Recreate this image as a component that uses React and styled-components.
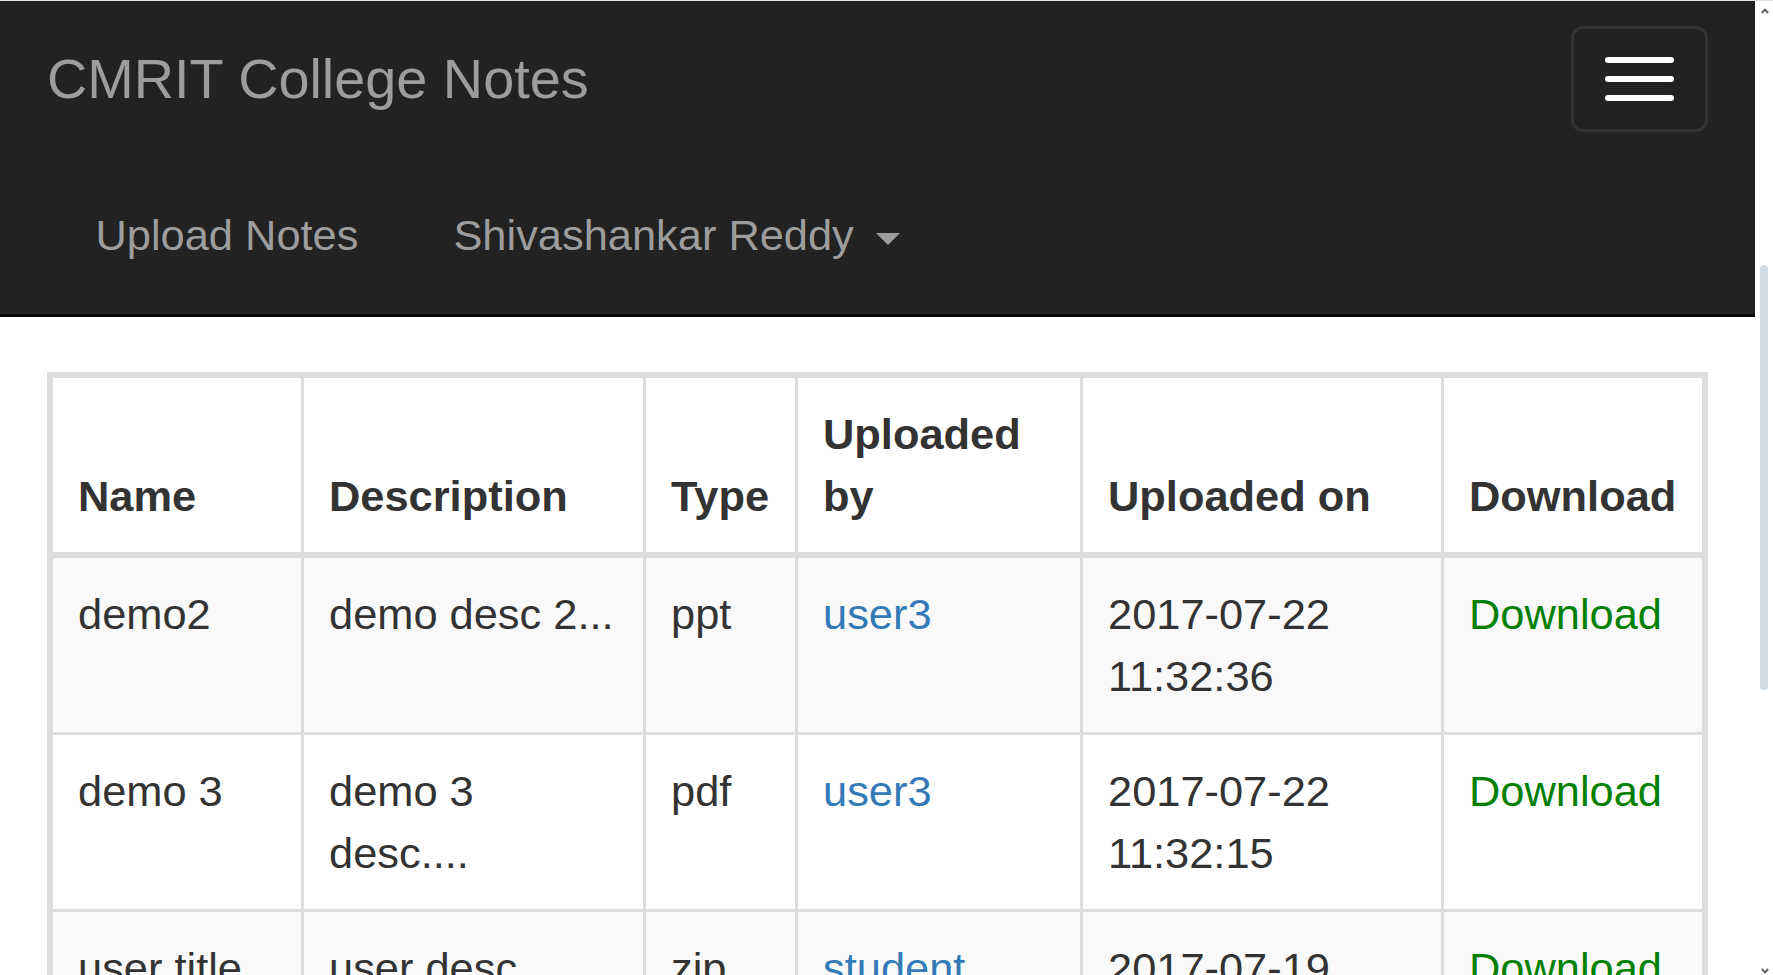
import React from "react";
import styled, { createGlobalStyle } from "styled-components";

const GlobalStyle = createGlobalStyle`
  html, body {
    margin: 0;
    padding: 0;
    overflow: hidden;
    background: #fff;
  }
  * {
    box-sizing: border-box;
  }
`;

const notes = [
  {
    name: "demo2",
    desc: "demo desc 2...",
    type: "ppt",
    user: "user3",
    date: "2017-07-22 11:32:36",
  },
  {
    name: "demo 3",
    desc: "demo 3 desc....",
    type: "pdf",
    user: "user3",
    date: "2017-07-22 11:32:15",
  },
  {
    name: "user title",
    desc: "user desc...",
    type: "zip",
    user: "student",
    date: "2017-07-19 10:24:51",
  },
];

const columns = [
  { label: "Name", width: 248 },
  { label: "Description", width: 342 },
  { label: "Type", width: 152 },
  { label: "Uploaded by", width: 285 },
  { label: "Uploaded on", width: 361 },
  { label: "Download", width: 261, nowrap: true },
];

function App() {
  return (
    <>
      <GlobalStyle />
      <Viewport>
        <Page>
          <Navbar>
            <NavHeader>
              <Brand href="#">CMRIT College Notes</Brand>
              <Toggle type="button" aria-label="Toggle navigation">
                <IconBar />
                <IconBar />
                <IconBar />
              </Toggle>
            </NavHeader>
            <NavList>
              <NavLink href="#">Upload Notes</NavLink>
              <NavLink href="#">
                Shivashankar Reddy <Caret />
              </NavLink>
            </NavList>
          </Navbar>

          <Main>
            <TableWrap>
              <Table>
                <thead>
                  <tr>
                    {columns.map((c, i) => (
                      <Th key={c.label} $w={c.width} $first={i === 0} $nowrap={c.nowrap}>
                        {c.label}
                      </Th>
                    ))}
                  </tr>
                </thead>
                <tbody>
                  {notes.map((n, r) => (
                    <Row key={n.name} $striped={r % 2 === 0}>
                      <Td $first $top={r > 0}>{n.name}</Td>
                      <Td $top={r > 0}>{n.desc}</Td>
                      <Td $top={r > 0}>{n.type}</Td>
                      <Td $top={r > 0}>
                        <UserLink href="#">{n.user}</UserLink>
                      </Td>
                      <Td $top={r > 0}>{n.date}</Td>
                      <Td $top={r > 0}>
                        <DownloadLink href="#">Download</DownloadLink>
                      </Td>
                    </Row>
                  ))}
                </tbody>
              </Table>
            </TableWrap>
          </Main>
        </Page>

        <Scrollbar>
          <Arrow>
            <svg width="8" height="6" viewBox="0 0 8 6">
              <polyline points="0.8,5 4,1.6 7.2,5" fill="none" stroke="#606060" strokeWidth="2" />
            </svg>
          </Arrow>
          <Thumb $top={244} $height={425} />
          <Arrow $bottom>
            <svg width="8" height="6" viewBox="0 0 8 6">
              <polyline points="0.8,1 4,4.4 7.2,1" fill="none" stroke="#606060" strokeWidth="2" />
            </svg>
          </Arrow>
        </Scrollbar>
      </Viewport>
    </>
  );
}

const Viewport = styled.div`
  display: flex;
  width: 100vw;
  height: 975px;
  border-top: 1px solid #dbe2e9;
  overflow: hidden;
  font-family: "Liberation Sans", Arial, Helvetica, sans-serif;
`;

const Page = styled.div`
  flex: 1;
  min-width: 0;
  overflow: hidden;
`;

const Navbar = styled.nav`
  background: #222;
  border-bottom: 3px solid #080808;
`;

const NavHeader = styled.div`
  display: flex;
  justify-content: space-between;
  align-items: flex-start;
  height: 155px;
`;

const Brand = styled.a`
  padding: 46.5px 47px;
  font-size: 55.8px;
  line-height: 62px;
  color: #9d9d9d;
  text-decoration: none;
  white-space: nowrap;
`;

const Toggle = styled.button`
  margin: 25px 47px 0 0;
  width: 137px;
  height: 106px;
  padding: 0;
  background: transparent;
  border: 3px solid #333;
  border-radius: 12px;
  display: flex;
  flex-direction: column;
  align-items: center;
  justify-content: center;
  gap: 13px;
`;

const IconBar = styled.span`
  display: block;
  width: 69px;
  height: 6px;
  border-radius: 3px;
  background: #fff;
`;

const NavList = styled.div`
  display: flex;
  padding: 17px 0 17px 48px;
`;

const NavLink = styled.a`
  padding: 31px 47.5px;
  font-size: 43.4px;
  line-height: 62px;
  color: #9d9d9d;
  text-decoration: none;
  white-space: nowrap;
`;

const Caret = styled.span`
  display: inline-block;
  width: 0;
  height: 0;
  margin-left: 10px;
  vertical-align: middle;
  border-top: 12px solid #9d9d9d;
  border-left: 12px solid transparent;
  border-right: 12px solid transparent;
`;

const Main = styled.main`
  padding: 55px 47px 0;
`;

const TableWrap = styled.div`
  border: 3px solid #ddd;
`;

const Table = styled.table`
  width: 100%;
  table-layout: fixed;
  border-collapse: separate;
  border-spacing: 0;
  border: 3px solid #ddd;
  font-size: 43.4px;
  line-height: 62px;
  color: #333;
`;

const Th = styled.th`
  width: ${(p) => p.$w}px;
  padding: 25px;
  text-align: left;
  vertical-align: bottom;
  font-weight: bold;
  white-space: ${(p) => (p.$nowrap ? "nowrap" : "normal")};
  background: #fff;
  border-left: ${(p) => (p.$first ? "0" : "3px solid #ddd")};
  border-bottom: 6px solid #ddd;
`;

const Row = styled.tr`
  background: ${(p) => (p.$striped ? "#f9f9f9" : "#fff")};
`;

const Td = styled.td`
  padding: 25px;
  vertical-align: top;
  border-left: ${(p) => (p.$first ? "0" : "3px solid #ddd")};
  border-top: ${(p) => (p.$top ? "3px solid #ddd" : "0")};
`;

const UserLink = styled.a`
  color: #337ab7;
  text-decoration: none;
`;

const DownloadLink = styled.a`
  color: green;
  text-decoration: none;
`;

const Scrollbar = styled.div`
  flex: 0 0 18px;
  display: flex;
  flex-direction: column;
  background: #fff;
`;

const Arrow = styled.div`
  height: 20px;
  display: flex;
  align-items: center;
  justify-content: center;
  padding-left: 2px;
  margin-top: ${(p) => (p.$bottom ? "auto" : "0")};
  margin-bottom: ${(p) => (p.$bottom ? "-6px" : "0")};
`;

const Thumb = styled.div`
  margin: ${(p) => p.$top}px 0 0 5px;
  width: 8px;
  height: ${(p) => p.$height}px;
  border-radius: 4px;
  background: #cfdbe5;
`;

export default App;
